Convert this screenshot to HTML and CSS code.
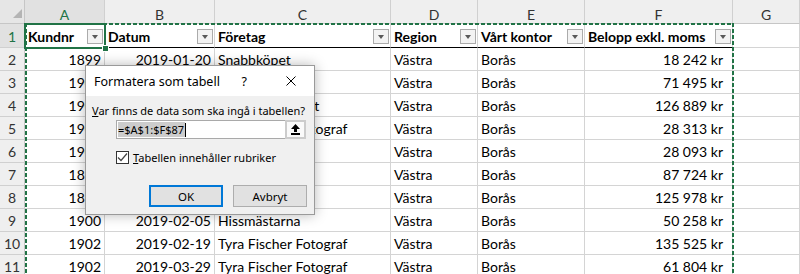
FILE: index.html
```html
<!DOCTYPE html>
<html lang="sv">
<head>
<meta charset="utf-8">
<title>Formatera som tabell</title>
<link rel="stylesheet" href="styles.css">
</head>
<body>
<div class="sheet">
  <div class="c corner"><svg width="24" height="23" viewBox="0 0 24 23"><polygon points="22,9 22,18 13,18" fill="#b4b4b4"/></svg></div>
  <div class="c ch sel">A</div>
  <div class="c ch">B</div>
  <div class="c ch">C</div>
  <div class="c ch">D</div>
  <div class="c ch">E</div>
  <div class="c ch">F</div>
  <div class="c ch">G</div>

  <div class="c rh sel">1</div>
  <div class="c th"><span>Kundnr</span><span class="fb"></span></div>
  <div class="c th"><span>Datum</span><span class="fb"></span></div>
  <div class="c th"><span>Företag</span><span class="fb"></span></div>
  <div class="c th"><span>Region</span><span class="fb"></span></div>
  <div class="c th"><span>Vårt kontor</span><span class="fb"></span></div>
  <div class="c th"><span>Belopp exkl. moms</span><span class="fb"></span></div>
  <div class="c"></div>

  <div class="c rh">2</div>
  <div class="c num">1899</div><div class="c num">2019-01-20</div><div class="c">Snabbköpet</div><div class="c">Västra</div><div class="c">Borås</div><div class="c amt">18 242 kr</div><div class="c"></div>

  <div class="c rh">3</div>
  <div class="c num">1901</div><div class="c num"></div><div class="c"></div><div class="c">Västra</div><div class="c">Borås</div><div class="c amt">71 495 kr</div><div class="c"></div>

  <div class="c rh">4</div>
  <div class="c num">1904</div><div class="c num"></div><div class="c">Fixarnas Konsult</div><div class="c">Västra</div><div class="c">Borås</div><div class="c amt">126 889 kr</div><div class="c"></div>

  <div class="c rh">5</div>
  <div class="c num">1902</div><div class="c num"></div><div class="c">Tyra Fischer Fotograf</div><div class="c">Västra</div><div class="c">Borås</div><div class="c amt">28 313 kr</div><div class="c"></div>

  <div class="c rh">6</div>
  <div class="c num">1905</div><div class="c num"></div><div class="c"></div><div class="c">Västra</div><div class="c">Borås</div><div class="c amt">28 093 kr</div><div class="c"></div>

  <div class="c rh">7</div>
  <div class="c num">1898</div><div class="c num"></div><div class="c"></div><div class="c">Västra</div><div class="c">Borås</div><div class="c amt">87 724 kr</div><div class="c"></div>

  <div class="c rh">8</div>
  <div class="c num">1897</div><div class="c num"></div><div class="c"></div><div class="c">Västra</div><div class="c">Borås</div><div class="c amt">125 978 kr</div><div class="c"></div>

  <div class="c rh">9</div>
  <div class="c num">1900</div><div class="c num">2019-02-05</div><div class="c">Hissmästarna</div><div class="c">Västra</div><div class="c">Borås</div><div class="c amt">50 258 kr</div><div class="c"></div>

  <div class="c rh">10</div>
  <div class="c num">1902</div><div class="c num">2019-02-19</div><div class="c">Tyra Fischer Fotograf</div><div class="c">Västra</div><div class="c">Borås</div><div class="c amt">135 525 kr</div><div class="c"></div>

  <div class="c rh">11</div>
  <div class="c num">1902</div><div class="c num">2019-03-29</div><div class="c">Tyra Fischer Fotograf</div><div class="c">Västra</div><div class="c">Borås</div><div class="c amt">61 804 kr</div><div class="c"></div>

  <div class="marquee mq-top"></div>
  <div class="marquee mq-left"></div>
  <div class="marquee mq-right"></div>
  <div class="active"><span class="handle"></span></div>

  <div class="dialog">
    <div class="dlg-title">
      <span class="dlg-caption">Formatera som tabell</span>
      <span class="dlg-help">?</span>
      <svg class="dlg-close" width="10" height="10" viewBox="0 0 10 10"><path d="M0.5 0.5 L9.5 9.5 M9.5 0.5 L0.5 9.5" stroke="#000" stroke-width="1" fill="none"/></svg>
    </div>
    <div class="dlg-body">
      <div class="dlg-label"><u>V</u>ar finns de data som ska ingå i tabellen?</div>
      <div class="dlg-range">
        <div class="range-input"><span class="range-sel">=$A$1:$F$87</span><span class="caret"></span></div>
        <div class="range-btn"><svg width="9" height="11" viewBox="0 0 9 11"><polygon points="4.5,0 0,5 3,5 3,8 6,8 6,5 9,5" fill="#000"/><rect x="0" y="9" width="9" height="2" fill="#000"/></svg></div>
      </div>
      <div class="dlg-check">
        <span class="box"><svg width="11" height="11" viewBox="0 0 11 11"><polyline points="1,5.5 4,8.5 10,1.5" fill="none" stroke="#444" stroke-width="1.2"/></svg></span>
        <span><u>T</u>abellen innehåller rubriker</span>
      </div>
      <div class="dlg-buttons">
        <div class="btn btn-default">OK</div>
        <div class="btn">Avbryt</div>
      </div>
    </div>
  </div>
</div>
</body>
</html>
```

FILE: styles.css
```css
html, body {
  margin: 0;
  padding: 0;
  background: #ffffff;
}

.sheet {
  position: relative;
  display: grid;
  grid-template-columns: 25px 80px 110px 176px 87px 107px 148px 67px;
  grid-template-rows: 24px 24px repeat(10, 23px);
  width: 800px;
  height: 274px;
  overflow: hidden;
  font-family: Lato, "Liberation Sans", sans-serif;
  font-size: 14px;
  color: #000;
}

.c {
  box-sizing: border-box;
  border-right: 1px solid #d4d4d4;
  border-bottom: 1px solid #d4d4d4;
  display: flex;
  align-items: flex-end;
  padding: 0 3px 2px 3px;
  line-height: 16px;
  white-space: nowrap;
  min-width: 0;
}

.num {
  justify-content: flex-end;
}

.amt {
  justify-content: flex-end;
  padding-right: 9px;
}

.corner {
  background: #e6e6e6;
  padding: 0;
  border-right: 1px solid #c6c6c6;
  border-bottom: 1px solid #c6c6c6;
}

.corner svg {
  display: block;
}

.ch {
  background: #efefef;
  justify-content: center;
  padding: 0;
  color: #333;
  border-right: 1px solid #d0d0d0;
  border-bottom: 1px solid #c6c6c6;
}

.rh {
  background: #efefef;
  justify-content: center;
  padding: 0 0 2px 0;
  color: #333;
  border-right: 1px solid #c6c6c6;
  border-bottom: 1px solid #d0d0d0;
}

.ch.sel,
.rh.sel {
  background: #e1e1e1;
  color: #217346;
}

.th {
  font-weight: 700;
  justify-content: space-between;
  border-bottom: 1px solid #000;
  padding-right: 1px;
}

.fb {
  position: relative;
  box-sizing: border-box;
  width: 16px;
  height: 15px;
  border: 1px solid #ababab;
  background: #f3f3f3;
  align-self: flex-end;
  margin-bottom: 1px;
  flex: none;
}

.fb::after {
  content: "";
  position: absolute;
  left: 4px;
  top: 5px;
  border-left: 3.5px solid transparent;
  border-right: 3.5px solid transparent;
  border-top: 4px solid #595959;
}

.marquee {
  position: absolute;
}

.mq-top {
  left: 25px;
  top: 23px;
  width: 709px;
  height: 2px;
  background: repeating-linear-gradient(90deg, #217346 0 4px, transparent 4px 6px);
}

.mq-left {
  left: 25px;
  top: 23px;
  width: 2px;
  height: 260px;
  background: repeating-linear-gradient(180deg, #217346 0 4px, transparent 4px 6px);
}

.mq-right {
  left: 732px;
  top: 23px;
  width: 2px;
  height: 260px;
  background: repeating-linear-gradient(180deg, #217346 0 4px, transparent 4px 6px);
}

.active {
  position: absolute;
  left: 24px;
  top: 23px;
  width: 82px;
  height: 26px;
  box-sizing: border-box;
  border: 2px solid #217346;
}

.handle {
  position: absolute;
  right: -5px;
  bottom: -5px;
  width: 5px;
  height: 5px;
  background: #217346;
  border: 1px solid #fff;
}

/* Dialog */
.dialog {
  position: absolute;
  left: 85px;
  top: 65px;
  width: 230px;
  height: 150px;
  box-sizing: border-box;
  border: 1px solid #9a9a9a;
  background: #f0f0f0;
  box-shadow: 0 0 12px rgba(0, 0, 0, 0.28);
  font-family: "Noto Sans", "Open Sans", sans-serif;
  font-size: 11px;
  color: #000;
  display: flex;
  flex-direction: column;
}

.dlg-title {
  height: 30px;
  background: #ffffff;
  display: flex;
  align-items: center;
  padding-left: 8px;
  flex: none;
}

.dlg-caption {
  font-size: 12.5px;
  flex: 1;
}

.dlg-help {
  font-size: 12.5px;
  margin-right: 39px;
}

.dlg-close {
  margin-right: 18px;
  display: block;
}

.dlg-body {
  flex: 1;
  padding-left: 6px;
  display: flex;
  flex-direction: column;
}

.dlg-label {
  margin-top: 7px;
  line-height: 16px;
  height: 16px;
  white-space: nowrap;
}

.dlg-range {
  margin-top: 1px;
  margin-left: 24px;
  display: flex;
  height: 19px;
}

.range-input {
  box-sizing: border-box;
  width: 170px;
  height: 19px;
  border: 1px solid #a9a9a9;
  background: #fff;
  display: flex;
  align-items: center;
  padding-left: 1px;
}

.range-sel {
  background: #cccccc;
  line-height: 15px;
  height: 15px;
  padding-right: 1px;
}

.caret {
  width: 1px;
  height: 14px;
  background: #000;
}

.range-btn {
  box-sizing: border-box;
  width: 21px;
  height: 19px;
  border: 2px solid #cccccc;
  background: #fafafa;
  display: flex;
  align-items: center;
  justify-content: center;
  margin-left: -1px;
}

.range-btn svg {
  display: block;
}

.dlg-check {
  margin-top: 12px;
  margin-left: 24px;
  display: flex;
  align-items: center;
  gap: 4px;
  height: 13px;
  white-space: nowrap;
}

.box {
  box-sizing: border-box;
  width: 13px;
  height: 13px;
  border: 1px solid #333;
  background: #fff;
  display: flex;
  align-items: center;
  justify-content: center;
  flex: none;
}

.box svg {
  display: block;
}

.dlg-buttons {
  margin-top: 21px;
  margin-left: 57px;
  display: flex;
  gap: 10px;
}

.btn {
  box-sizing: border-box;
  width: 74px;
  height: 22px;
  border: 1px solid #adadad;
  background: #e1e1e1;
  display: flex;
  align-items: center;
  justify-content: center;
  font-size: 11.5px;
}

.btn-default {
  border: 2px solid #0078d7;
}
```
